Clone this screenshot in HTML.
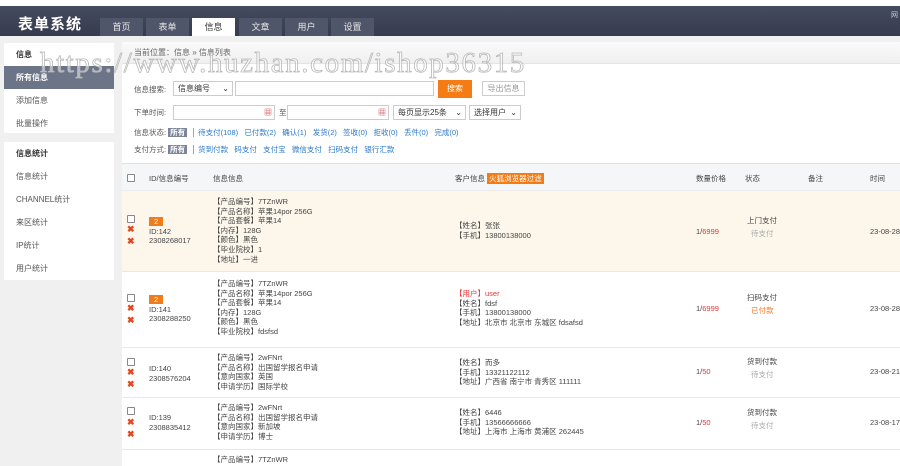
<!DOCTYPE html>
<html><head><meta charset="utf-8"><style>
*{margin:0;padding:0;box-sizing:border-box}
body{width:900px;height:466px;overflow:hidden;background:#f0f0f0;font-family:"Liberation Sans","Noto Sans CJK SC",sans-serif;font-size:8px;color:#444;position:relative}
.top{position:absolute;left:0;top:0;width:900px;height:6px;background:#fff}
.hdr{position:absolute;left:0;top:6px;width:900px;height:30px;background:linear-gradient(#454b60,#363b4d)}
.logo{position:absolute;left:18px;top:7px;color:#fff;font-size:15px;font-weight:bold;letter-spacing:1px}
.tab{position:absolute;top:12px;height:18px;width:43px;background:#50566a;color:#e8e8e8;font-size:9px;text-align:center;line-height:18px}
.tab.on{background:#fff;color:#333}
.side{position:absolute;left:4px;background:#fff;width:110px}
.side div{height:23px;line-height:23px;padding-left:12px;font-size:8px;color:#555}
.side .t{font-weight:bold;color:#333}
.side .on{background:#6c7488;color:#fff;font-weight:bold}
.main{position:absolute;left:122px;top:42px;width:778px;height:424px;background:#fff}
.bc{position:absolute;left:0;top:0;width:778px;height:22px;background:linear-gradient(#fafafa,#f0f0f0);border-bottom:1px solid #e4e4e4;padding:5px 12px;color:#666}
.a{position:absolute;font-size:7.5px;color:#555;white-space:nowrap}
.in{position:absolute;border:1px solid #ccc;background:#fff;height:15px;font-size:8px;padding-left:4px;line-height:13px;color:#333}
.blue{color:#2a78c8}
.tag{background:#7d8497;color:#fff;padding:0 2px;font-weight:bold}
.th{position:absolute;left:0;top:121px;width:778px;height:28px;background:#f4f6f8;border-top:1px solid #dde;border-bottom:1px solid #eee}
.row{position:absolute;left:0;width:778px;border-bottom:1px solid #e8e8e8}
.c{position:absolute;font-size:7.5px;line-height:9.6px;color:#444;white-space:nowrap}
.cb{position:absolute;width:8px;height:8px;border:1px solid #888;border-radius:1px;background:#fff}
.x{position:absolute;color:#e8431c;font-size:9px;font-weight:bold}
.badge{display:inline-block;background:#f27b1c;color:#fff;padding:0 5px;font-size:7.5px;line-height:9px}
.red{color:#e33}
.wm{position:absolute;left:40px;top:47px;font-family:"Liberation Serif",serif;font-size:29px;color:rgba(255,255,255,.5);-webkit-text-stroke:0.8px #b8b8b8;letter-spacing:1.6px;white-space:nowrap}
</style></head><body>
<div class="top"></div>
<div class="hdr">
<div class="logo">表单系统</div>
<div class="tab" style="left:100px">首页</div>
<div class="tab" style="left:146px">表单</div>
<div class="tab on" style="left:192px">信息</div>
<div class="tab" style="left:239px">文章</div>
<div class="tab" style="left:285px">用户</div>
<div class="tab" style="left:331px">设置</div>
<div style="position:absolute;right:2px;top:4px;color:#ccc;font-size:7px">网</div>
</div>
<div class="side" style="top:43px;height:90px"><div class="t">信息</div><div class="on">所有信息</div><div>添加信息</div><div>批量操作</div></div>
<div class="side" style="top:142px;height:138px"><div class="t">信息统计</div><div>信息统计</div><div>CHANNEL统计</div><div>来区统计</div><div>IP统计</div><div>用户统计</div></div>
<div class="main">
<div class="bc">当前位置：信息 » 信息列表</div>
<div class="a" style="left:12px;top:42px">信息搜索:</div>
<div class="in" style="left:51px;top:39px;width:60px">信息编号 <span style="float:right;padding-right:3px">⌄</span></div>
<div class="in" style="left:113px;top:39px;width:199px"></div>
<div style="position:absolute;left:316px;top:38px;width:34px;height:18px;background:#f57c14;color:#fff;text-align:center;line-height:18px;font-size:8px">搜索</div>
<div class="in" style="left:360px;top:39px;width:43px;color:#999;text-align:center;padding:0">导出信息</div>
<div class="a" style="left:12px;top:65px">下单时间:</div>
<div class="in" style="left:51px;top:63px;width:102px"><span style="float:right;color:#c33;padding-right:2px">▦</span></div>
<div class="a" style="left:157px;top:65px">至</div>
<div class="in" style="left:165px;top:63px;width:102px"><span style="float:right;color:#c33;padding-right:2px">▦</span></div>
<div class="in" style="left:271px;top:63px;width:73px">每页显示25条 <span style="float:right;padding-right:3px">⌄</span></div>
<div class="in" style="left:347px;top:63px;width:52px">选择用户 <span style="float:right;padding-right:3px">⌄</span></div>
<div class="a" style="left:12px;top:85px">信息状态: <span class="tag">所有</span> &nbsp;│ <span class="blue">待支付(108) &nbsp; 已付款(2) &nbsp; 确认(1) &nbsp; 发货(2) &nbsp; 签收(0) &nbsp; 拒收(0) &nbsp; 丢件(0) &nbsp; 完成(0)</span></div>
<div class="a" style="left:12px;top:102px">支付方式: <span class="tag">所有</span> &nbsp;│ <span class="blue">货到付款 &nbsp; 码支付 &nbsp; 支付宝 &nbsp; 微信支付 &nbsp; 扫码支付 &nbsp; 银行汇款</span></div>
<div class="th">
<div class="cb" style="left:5px;top:10px"></div>
<div class="c" style="left:27px;top:10px">ID/信息编号</div>
<div class="c" style="left:91px;top:10px">信息信息</div>
<div class="c" style="left:333px;top:10px">客户信息 <span style="background:#f57c14;color:#fff;padding:1px 2px">火狐浏览器过滤</span></div>
<div class="c" style="left:574px;top:10px">数量价格</div>
<div class="c" style="left:623px;top:10px">状态</div>
<div class="c" style="left:686px;top:10px">备注</div>
<div class="c" style="left:748px;top:10px">时间</div>
</div>
<div class="row" style="top:149px;height:81px;background:#fdf7eb">
<div class="cb" style="left:5px;top:24px"></div><div class="x" style="left:5px;top:33px">✖</div><div class="x" style="left:5px;top:45px">✖</div>
<div class="c" style="left:27px;top:26px"><span class="badge">2</span><br>ID:142<br>2308268017</div>
<div class="c" style="left:91px;top:6px">【产品编号】7TZnWR<br>【产品名称】苹果14por 256G<br>【产品套餐】苹果14<br>【内存】128G<br>【颜色】黑色<br>【毕业院校】1<br>【地址】一进</div>
<div class="c" style="left:333px;top:30px">【姓名】张张<br>【手机】13800138000</div>
<div class="c" style="left:574px;top:36px">1/<span class="red">6999</span></div>
<div class="c" style="left:625px;top:25px">上门支付<br><span style="color:#aaa;padding-left:4px;line-height:16px">待支付</span></div>
<div class="c" style="left:748px;top:36px">23-08-28</div>
</div>
<div class="row" style="top:230px;height:76px">
<div class="cb" style="left:5px;top:22px"></div><div class="x" style="left:5px;top:31px">✖</div><div class="x" style="left:5px;top:43px">✖</div>
<div class="c" style="left:27px;top:23px"><span class="badge">2</span><br>ID:141<br>2308288250</div>
<div class="c" style="left:91px;top:7px">【产品编号】7TZnWR<br>【产品名称】苹果14por 256G<br>【产品套餐】苹果14<br>【内存】128G<br>【颜色】黑色<br>【毕业院校】fdsfsd</div>
<div class="c" style="left:333px;top:17px"><span class="red">【用户】user</span><br>【姓名】fdsf<br>【手机】13800138000<br>【地址】北京市 北京市 东城区 fdsafsd</div>
<div class="c" style="left:574px;top:32px">1/<span class="red">6999</span></div>
<div class="c" style="left:625px;top:21px">扫码支付<br><span style="color:#f07a2a;padding-left:4px;line-height:16px">已付款</span></div>
<div class="c" style="left:748px;top:32px">23-08-28</div>
</div>
<div class="row" style="top:306px;height:50px">
<div class="cb" style="left:5px;top:10px"></div><div class="x" style="left:5px;top:19px">✖</div><div class="x" style="left:5px;top:31px">✖</div>
<div class="c" style="left:27px;top:16px">ID:140<br>2308576204</div>
<div class="c" style="left:91px;top:5px">【产品编号】2wFNrt<br>【产品名称】出国留学报名申请<br>【意向国家】英国<br>【申请学历】国际学校</div>
<div class="c" style="left:333px;top:10px">【姓名】而多<br>【手机】13321122112<br>【地址】广西省 南宁市 青秀区 111111</div>
<div class="c" style="left:574px;top:19px">1/<span class="red">50</span></div>
<div class="c" style="left:625px;top:9px">货到付款<br><span style="color:#aaa;padding-left:4px;line-height:16px">待支付</span></div>
<div class="c" style="left:748px;top:19px">23-08-21</div>
</div>
<div class="row" style="top:356px;height:52px">
<div class="cb" style="left:5px;top:9px"></div><div class="x" style="left:5px;top:19px">✖</div><div class="x" style="left:5px;top:31px">✖</div>
<div class="c" style="left:27px;top:15px">ID:139<br>2308835412</div>
<div class="c" style="left:91px;top:5px">【产品编号】2wFNrt<br>【产品名称】出国留学报名申请<br>【意向国家】新加坡<br>【申请学历】博士</div>
<div class="c" style="left:333px;top:10px">【姓名】6446<br>【手机】13566666666<br>【地址】上海市 上海市 黄浦区 262445</div>
<div class="c" style="left:574px;top:20px">1/<span class="red">50</span></div>
<div class="c" style="left:625px;top:10px">货到付款<br><span style="color:#aaa;padding-left:4px;line-height:16px">待支付</span></div>
<div class="c" style="left:748px;top:20px">23-08-17</div>
</div>
<div class="c" style="left:91px;top:413px">【产品编号】7TZnWR</div>
</div>
<div class="wm">https://www.huzhan.com/ishop36315</div>
</body></html>
